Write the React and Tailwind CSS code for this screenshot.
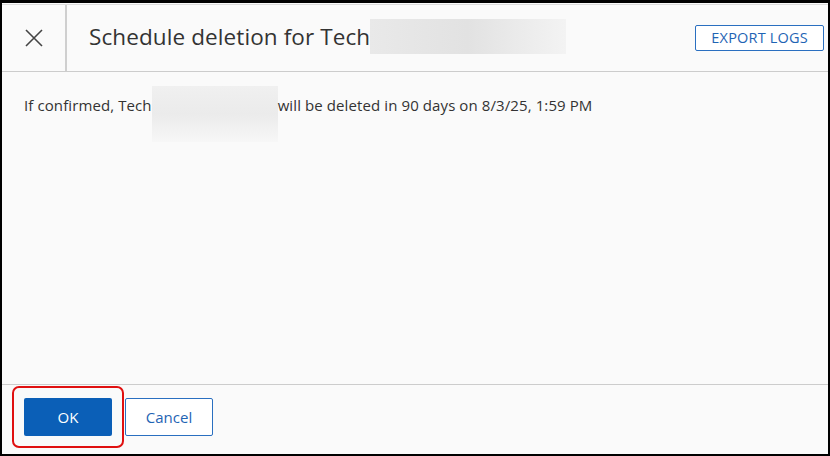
import React from 'react';

function CloseIcon() {
    return (
        <svg width="20" height="20" viewBox="0 0 20 20" fill="none" stroke="#444" strokeWidth="1.6">
            <path d="M2 2 L18 18 M18 2 L2 18" />
        </svg>
    );
}

export default function App() {
    return (
        <div className="w-[830px] h-[456px] bg-white" style={{ fontFamily: '"Open Sans", "Noto Sans", sans-serif' }}>
            <div className="relative w-full h-full flex flex-col bg-[#fafafa] border-t-[3px] border-l-2 border-r-2 border-b-2 border-black">
                <div className="h-[1px] bg-[#dcdcdc] mt-[1px]" />

                {/* Header */}
                <div className="flex items-stretch h-[67px] border-b border-[#cccccc]">
                    <div className="w-[65px] flex items-center justify-center border-r-2 border-[#cfcfcf]">
                        <CloseIcon />
                    </div>
                    <div className="flex-1 flex items-center pl-[22px] pr-[4px]">
                        <h2 className="text-[22.5px] text-[#333] tracking-[0.1px] whitespace-nowrap -mt-[3px]">Schedule deletion for Tech</h2>
                        <div className="w-[196px] h-[35px] -mt-[3px] bg-gradient-to-r from-[#e9e9e9] via-[#e2e2e2] to-[#f3f3f3]" />
                        <div className="flex-1" />
                        <button className="h-[26px] px-[15px] border border-[#2a6fc0] rounded-[2px] text-[#1f64b4] text-[14.5px] bg-white tracking-[0.2px]">
                            EXPORT LOGS
                        </button>
                    </div>
                </div>

                {/* Body */}
                <div className="flex-1 pl-[22px] pt-[14px]">
                    <div className="flex items-start text-[15px] text-[#333] tracking-[0.1px]">
                        <span className="mt-[8px]">If confirmed, Tech</span>
                        <div className="w-[126px] h-[56px] bg-gradient-to-b from-[#f0f0f0] via-[#ebebeb] to-[#f7f7f7]" />
                        <span className="mt-[8px]">will be deleted in 90 days on 8/3/25, 1:59 PM</span>
                    </div>
                </div>

                {/* Footer */}
                <div className="h-[70px] border-t border-[#cccccc] flex items-start gap-[13px] pl-[22px] pt-[13px]">
                    <button className="w-[88px] h-[38px] bg-[#0b5fb7] text-white text-[15px] rounded-[2px]">OK</button>
                    <button className="w-[88px] h-[38px] border border-[#2a6fc0] text-[#1f64b4] text-[15px] bg-white rounded-[2px]">Cancel</button>
                </div>

                <div className="absolute left-[10px] top-[383px] w-[112px] h-[62px] border-2 border-[#e01010] rounded-[7px]" />
            </div>
        </div>
    );
}
